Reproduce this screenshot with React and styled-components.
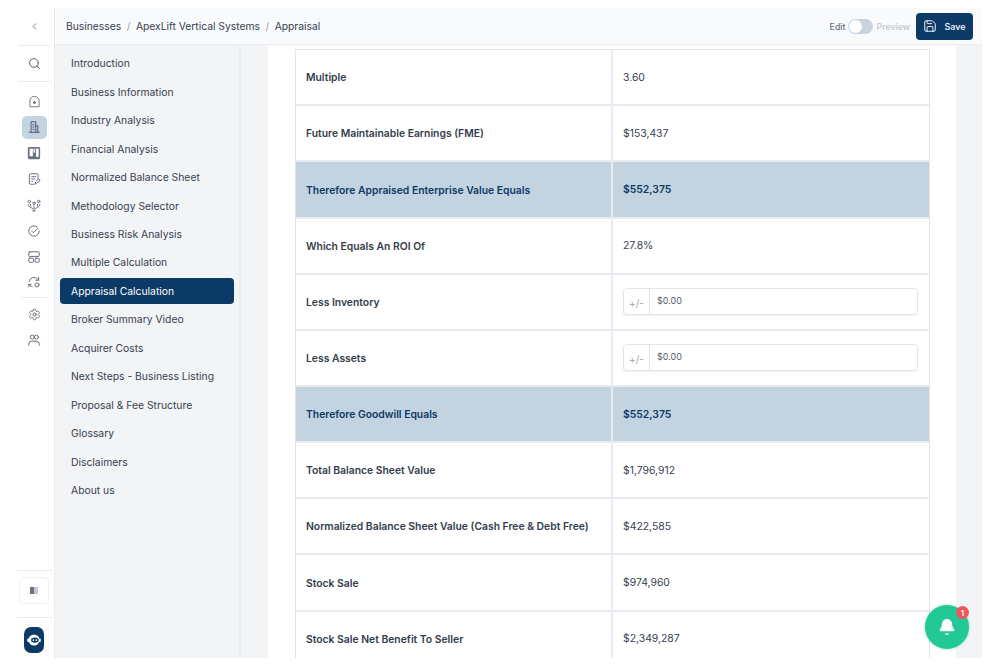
import React from 'react';
import styled, { createGlobalStyle } from 'styled-components';
import { ChevronLeft, Search, Settings, Save, Bell } from 'lucide-react';

const Global = createGlobalStyle`
  html, body { margin: 0; padding: 0; background: #fff; overflow: hidden; height: 666px; }
  body { font-family: Inter, "Liberation Sans", sans-serif; -webkit-font-smoothing: antialiased; }
  * { box-sizing: border-box; }
`;
const Shell = styled.div`
  position: relative; width: 982px; height: 650px; margin-top: 8px; display: flex; overflow: hidden; background: #f3f4f6;
`;
const Rail = styled.aside`
  width: 55px; flex: none; background: #fff; border-right: 1px solid #e8eaee; padding-left: 14px; display: flex; flex-direction: column; align-items: center;
`;
const RailTop = styled.div`
  height: 37px; width: 100%; display: flex; align-items: center; justify-content: center; color: #6b7280;
`;
const RailRule = styled.div`
  height: 1px; width: ${p => p.$w || 32}px; background: #e8eaee; flex: none; margin-left: ${p => p.$shift || 0}px; margin-top: ${p => p.$top || 0}px;
`;
const RailSearch = styled.div`
  height: 35px; width: 100%; display: flex; align-items: center; justify-content: center; color: #4b5563;
`;
const RailGroup = styled.div`
  display: flex; flex-direction: column; align-items: center; gap: 2.85px; padding-top: ${p => p.$top}px; width: 100%;
`;
const RailIcon = styled.div`
  width: 25px; height: 23px; border-radius: 5px; display: flex; align-items: center; justify-content: center; color: #5f6773;
  background: ${p => (p.$active ? '#c3d3e0' : 'transparent')};
`;
const RailSpacer = styled.div`flex: 1;`;
const DockBox = styled.div`
  width: 30px; height: 27px; margin: 6px 0 13px; border: 1px solid #eef0f3; border-radius: 4px; display: flex; align-items: center; justify-content: center;
`;
const LogoBadge = styled.div`
  width: 20px; height: 26px; margin: 9px 0 5px; border-radius: 7px; background: #0b3a66; display: flex; align-items: center; justify-content: center;
`;
const Main = styled.div`flex: 1; min-width: 0; display: flex; flex-direction: column;`;
const Header = styled.header`
  height: 37px; flex: none; background: #f9fafb; border-bottom: 1px solid #eceef1; display: flex; align-items: center; padding: 0 9px 0 11px;
`;
const Crumbs = styled.nav`
  display: flex; align-items: center; gap: 5.5px; font-size: 10.3px; color: #374151; flex: 1; white-space: nowrap;
`;
const Sep = styled.span`color: #9ca3af;`;
const ModeLabel = styled.span`
  font-size: 8.8px; font-weight: 500; color: ${p => (p.$on ? '#64748b' : '#c2c7cf')};
`;
const Toggle = styled.span`
  width: 25px; height: 15px; border-radius: 8px; background: #c9d3de; margin: 0 3.5px 0 2.5px; display: flex; align-items: center; padding-left: 1px;
`;
const Knob = styled.span`width: 13px; height: 13px; border-radius: 50%; background: #fff;`;
const SaveBtn = styled.button`
  width: 57px; height: 27px; margin-left: 6px; border: 0; border-radius: 4px; background: #0b3a66; color: #fff; font: 500 9px Inter, sans-serif;
  display: flex; align-items: center; justify-content: center; gap: 7px; padding: 0;
`;
const Body = styled.div`flex: 1; min-height: 0; display: flex;`;
const SideNav = styled.nav`
  width: 186px; flex: none; background: #f3f4f6; box-shadow: inset -2px 0 1px #eaecef; padding: 5.4px 7px 0 5px; display: flex; flex-direction: column;
`;
const NavItem = styled.div`
  height: 26px; margin-bottom: 2.45px; flex: none; border-radius: 4px; padding-left: 11px; display: flex; align-items: center; font-size: 10.35px; white-space: nowrap;
  color: ${p => (p.$active ? '#fff' : '#374151')}; background: ${p => (p.$active ? '#0b3a66' : 'transparent')};
`;
const Content = styled.main`
  width: 688px; margin-left: 27px; flex: none; background: #fff; padding: 4.2px 26px 0 27px; overflow: hidden;
`;
const Table = styled.div`
  width: 635px; border: 1px solid #e2e5ea; border-bottom: 0;
`;
const Row = styled.div`
  height: 56.15px; display: grid; grid-template-columns: 317px 1fr; border-bottom: 2px solid #e8ebef;
  background: ${p => (p.$hl ? '#c3d3e0' : '#fff')};
`;
const Label = styled.div`
  display: flex; align-items: center; padding-left: 10px; border-right: 2px solid #e8ebef; font-size: 10.35px; font-weight: 600; white-space: nowrap;
  color: ${p => (p.$hl ? '#0b3a66' : '#333d4b')};
`;
const Value = styled.div`
  display: flex; align-items: center; padding: 0 10px; font-size: 10.4px;
  font-weight: ${p => (p.$hl ? 600 : 400)}; color: ${p => (p.$hl ? '#0b3a66' : '#374151')};
`;
const InputGroup = styled.div`
  width: 295px; height: 27px; border: 1px solid #e2e5ea; border-radius: 4px; display: flex; align-items: stretch; background: #fff; box-shadow: 0 1px 1px #f0f1f3;
`;
const Addon = styled.span`
  width: 26px; border-right: 1px solid #e2e5ea; display: flex; align-items: center; justify-content: center; font-size: 10px; color: #9ca3af; padding-top: 2px;
`;
const Field = styled.span`
  flex: 1; display: flex; align-items: center; padding: 0 0 2px 7px; font-size: 9px; color: #555b65;
`;
const Fab = styled.div`
  position: absolute; left: 925px; top: 597px; width: 44px; height: 44px; border-radius: 50%; background: #22c997; box-shadow: 0 0 3px rgba(34,201,151,.5);
  display: flex; align-items: center; justify-content: center; color: #fff;
`;
const FabCount = styled.span`
  position: absolute; top: 1px; right: 0; width: 13px; height: 13px; border-radius: 50%; background: #f0565e; color: #fff; font-size: 8px; font-weight: 600;
  display: flex; align-items: center; justify-content: center;
`;

const Svg = ({ children, size = 14, ...r }) => (
  <svg width={size} height={size} viewBox="0 0 24 24" fill="none" stroke="currentColor" strokeWidth="1.6" strokeLinecap="round" strokeLinejoin="round" {...r}>{children}</svg>
);
const HomeIcon = () => <Svg size={13}><path d="M3.5 21V11a8.5 8.5 0 0 1 17 0v10z" /><circle cx="12" cy="14" r="1.8" fill="currentColor" /></Svg>;
const BuildingIcon = () => <Svg stroke="#44546a" size={14}><path d="M4 21h17M7 21V3h8v18M15 10h3.500v11" /><path d="M10 8h2M10 12h2M10 16h2" /></Svg>;
const BoardIcon = () => <svg width="14" height="14" viewBox="0 0 24 24"><rect x="1.5" y="1.5" width="21" height="21" rx="2.5" fill="#6b7280" /><rect x="4.500" y="4.500" width="5.500" height="13" fill="#fff" /><rect x="11" y="4.500" width="3" height="7" fill="#e5e7eb" /><rect x="15.500" y="4.500" width="4.500" height="14" fill="#fff" /></svg>;
const NoteIcon = () => <Svg><path d="M19 11V5a2 2 0 0 0-2-2H6a2 2 0 0 0-2 2v14a2 2 0 0 0 2 2h6" /><path d="M8 8h7M8 12h5M8 16h2" /><path d="M14 20l.6-3 5.4-5.2 2.4 2.4L17 19.4z" /></Svg>;
const NetworkIcon = () => <Svg strokeWidth="1.5"><circle cx="4" cy="6" r="2.200" /><circle cx="12" cy="9" r="2.200" /><circle cx="20" cy="6" r="2.200" /><path d="M2 11c0 3 1 4 4 5l4 2M22 11c0 3-1 4-4 5l-4 2M6 11v3M18 11v3M12 13v9M9.500 22h5" /></Svg>;
const CheckIcon = () => <Svg><path d="M21 12a9 9 0 1 1-4-7.500" /><path d="M8 12l3 3 8-8" /></Svg>;
const LayoutIcon = () => <Svg><rect x="3" y="3" width="18" height="8" rx="1.500" /><rect x="3" y="14" width="8" height="7" rx="1.500" /><rect x="14" y="14" width="7" height="7" rx="1.500" /></Svg>;
const SyncIcon = () => <Svg><path d="M4 11a8 8 0 0 1 14-4l2 2" /><path d="M20 4v5h-5" /><path d="M3 20v-4h4" /><path d="M3 16l2 2a7 7 0 0 0 4 2" /><circle cx="17" cy="17" r="3.500" /></Svg>;
const PeopleIcon = () => <Svg><circle cx="9" cy="7" r="3.500" /><circle cx="16" cy="7" r="3.500" /><path d="M3 21v-2a5 5 0 0 1 5-5h8a5 5 0 0 1 5 5v2" /></Svg>;
const PanelIcon = () => <svg width="8" height="7" viewBox="0 0 8 7"><rect width="4" height="7" fill="#6b7280" /><rect x="4" width="4" height="7" fill="#c4c8ce" /></svg>;
const LogoIcon = () => <svg width="14" height="14" viewBox="0 0 24 24"><circle cx="12" cy="12" r="9.500" fill="#fff" /><rect x="0.500" y="9.500" width="3" height="6" rx="1.500" fill="#fff" /><rect x="20.500" y="9.500" width="3" height="6" rx="1.500" fill="#fff" /><ellipse cx="13.500" cy="12" rx="6.500" ry="4.500" fill="#0b3a66" /><circle cx="11" cy="12" r="1.500" fill="#fff" /><circle cx="16" cy="12" r="1.500" fill="#fff" /></svg>;

const navItems = ['Introduction', 'Business Information', 'Industry Analysis', 'Financial Analysis', 'Normalized Balance Sheet', 'Methodology Selector', 'Business Risk Analysis', 'Multiple Calculation', 'Appraisal Calculation', 'Broker Summary Video', 'Acquirer Costs', 'Next Steps - Business Listing', 'Proposal & Fee Structure', 'Glossary', 'Disclaimers', 'About us'];
const rows = [
  { l: 'Multiple', v: '3.60' },
  { l: 'Future Maintainable Earnings (FME)', v: '$153,437' },
  { l: 'Therefore Appraised Enterprise Value Equals', v: '$552,375', hl: true },
  { l: 'Which Equals An ROI Of', v: '27.8%' },
  { l: 'Less Inventory', input: '$0.00' },
  { l: 'Less Assets', input: '$0.00' },
  { l: 'Therefore Goodwill Equals', v: '$552,375', hl: true },
  { l: 'Total Balance Sheet Value', v: '$1,796,912' },
  { l: 'Normalized Balance Sheet Value (Cash Free & Debt Free)', v: '$422,585' },
  { l: 'Stock Sale', v: '$974,960' },
  { l: 'Stock Sale Net Benefit To Seller', v: '$2,349,287' },
];

export default function App() {
  return (
    <Shell>
      <Global />
      <Rail>
        <RailTop><ChevronLeft size={11} strokeWidth={2} /></RailTop>
        <RailRule />
        <RailSearch><Search size={13} strokeWidth={1.7} /></RailSearch>
        <RailRule />
        <RailGroup $top={8}>
          <RailIcon><HomeIcon /></RailIcon>
          <RailIcon $active><BuildingIcon /></RailIcon>
          <RailIcon><BoardIcon /></RailIcon>
          <RailIcon><NoteIcon /></RailIcon>
          <RailIcon><NetworkIcon /></RailIcon>
          <RailIcon><CheckIcon /></RailIcon>
          <RailIcon><LayoutIcon /></RailIcon>
          <RailIcon><SyncIcon /></RailIcon>
        </RailGroup>
        <RailRule $w={26} $top={3} />
        <RailGroup $top={5}>
          <RailIcon><Settings size={13} strokeWidth={1.6} /></RailIcon>
          <RailIcon><PeopleIcon /></RailIcon>
        </RailGroup>
        <RailSpacer />
        <RailRule $w={36} $shift={2} />
        <DockBox><PanelIcon /></DockBox>
        <RailRule $w={36} $shift={2} />
        <LogoBadge><LogoIcon /></LogoBadge>
      </Rail>
      <Main>
        <Header>
          <Crumbs>
            <span>Businesses</span><Sep>/</Sep><span>ApexLift Vertical Systems</span><Sep>/</Sep><span>Appraisal</span>
          </Crumbs>
          <ModeLabel $on>Edit</ModeLabel>
          <Toggle><Knob /></Toggle>
          <ModeLabel>Preview</ModeLabel>
          <SaveBtn><Save size={14} strokeWidth={1.6} />Save</SaveBtn>
        </Header>
        <Body>
          <SideNav>
            {navItems.map(n => <NavItem key={n} $active={n === 'Appraisal Calculation'}>{n}</NavItem>)}
          </SideNav>
          <Content>
            <Table>
              {rows.map(r => (
                <Row key={r.l} $hl={r.hl}>
                  <Label $hl={r.hl}>{r.l}</Label>
                  <Value $hl={r.hl}>
                    {r.input ? <InputGroup><Addon>+/-</Addon><Field>{r.input}</Field></InputGroup> : r.v}
                  </Value>
                </Row>
              ))}
            </Table>
          </Content>
        </Body>
        <Fab><Bell size={18} fill="currentColor" strokeWidth={1.5} /><FabCount>1</FabCount></Fab>
      </Main>
    </Shell>
  );
}
